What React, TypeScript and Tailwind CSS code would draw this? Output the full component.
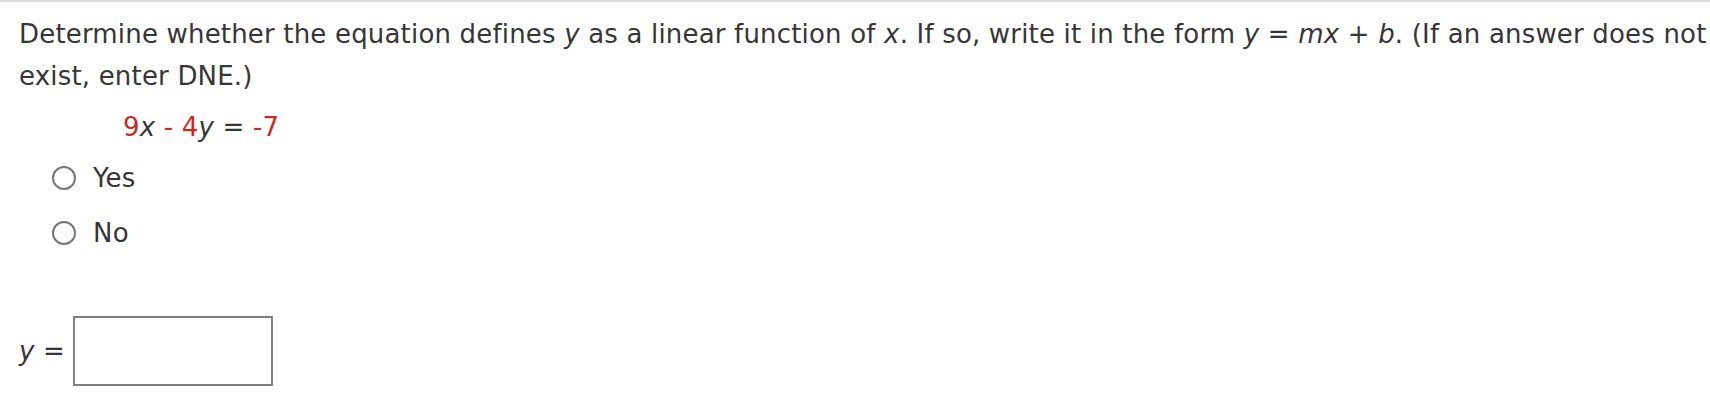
import React from 'react';

const Radio = ({ label }: { label: string }) => (
  <label className="flex items-center h-[42px]">
    <span className="ml-[33px] w-[24px] h-[24px] rounded-full border-2 border-[#767676] bg-white" />
    <span className="ml-[17px]">{label}</span>
  </label>
);

const App = () => {
  return (
    <div
      className="w-[1710px] h-[416px] bg-white border-t-2 border-[#dedede] text-[26px] leading-[42px] tracking-[0.18px] text-[#363636] overflow-hidden"
      style={{ fontFamily: '"DejaVu Sans", Verdana, sans-serif' }}
    >
      <div className="pl-[19px] pt-[11px] whitespace-nowrap">
        <p>
          Determine whether the equation defines <i>y</i> as a linear function of <i>x</i>. If so, write it in the
          form <i>y</i> = <i>mx</i> + <i>b</i>. (If an answer does not
          <br />
          exist, enter DNE.)
        </p>
        <p className="mt-[9px] ml-[104px]">
          <span className="text-[#cc2a1f]">9</span>
          <i>x</i>
          <span className="text-[#cc2a1f]"> - 4</span>
          <i>y</i> = <span className="text-[#cc2a1f]">-7</span>
        </p>
        <div className="mt-[9px]">
          <Radio label="Yes" />
          <div className="mt-[13px]">
            <Radio label="No" />
          </div>
        </div>
        <div className="mt-[62px] flex items-center">
          <span>
            <i>y</i> =
          </span>
          <div className="ml-[8px] w-[200px] h-[70px] border-2 border-[#7f7f7f]" />
        </div>
      </div>
    </div>
  );
};

export default App;
